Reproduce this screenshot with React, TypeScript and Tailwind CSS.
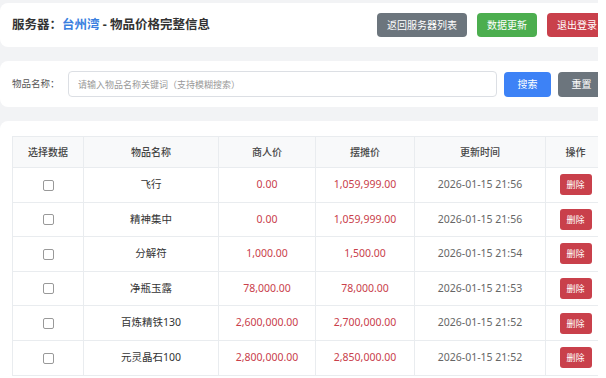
import React from "react";

interface Item {
  name: string;
  merchant: string;
  stall: string;
  time: string;
}

const items: Item[] = [
  { name: "飞行", merchant: "0.00", stall: "1,059,999.00", time: "2026-01-15 21:56" },
  { name: "精神集中", merchant: "0.00", stall: "1,059,999.00", time: "2026-01-15 21:56" },
  { name: "分解符", merchant: "1,000.00", stall: "1,500.00", time: "2026-01-15 21:54" },
  { name: "净瓶玉露", merchant: "78,000.00", stall: "78,000.00", time: "2026-01-15 21:53" },
  { name: "百炼精铁130", merchant: "2,600,000.00", stall: "2,700,000.00", time: "2026-01-15 21:52" },
  { name: "元灵晶石100", merchant: "2,800,000.00", stall: "2,850,000.00", time: "2026-01-15 21:52" },
];

const cell = "border border-[#e9ecef] text-center";

const App = () => {
  return (
    <div
      className="flex w-[606px] h-[378px] overflow-hidden bg-white"
      style={{ fontFamily: '"Noto Sans", "Noto Sans CJK SC", sans-serif' }}>
      <div className="w-[598px] h-full overflow-hidden bg-[#f2f3f5]">
        <div className="w-[624px] pt-[3px] flex flex-col gap-[14px]">
          {/* header */}
          <div className="h-[44px] bg-white rounded-lg flex items-center justify-between pl-3 pr-[17px]">
            <h1 className="text-[12.5px] font-bold text-[#333] leading-none">
              服务器：<span className="text-[#3b7fe0]">台州湾</span> - 物品价格完整信息
            </h1>
            <div className="flex items-center gap-[10px] text-[10px] text-white">
              <button className="h-[24px] px-[10px] rounded bg-[#6c757d]">返回服务器列表</button>
              <button className="h-[24px] px-[10px] rounded bg-[#4cae4f]">数据更新</button>
              <button className="h-[24px] px-[10px] rounded bg-[#c9404b]">退出登录</button>
            </div>
          </div>

          {/* search */}
          <div className="h-[46px] bg-white rounded-lg flex items-center pl-3 pr-[14px]">
            <span className="shrink-0 whitespace-nowrap text-[9.5px] text-[#555] w-[56px]">物品名称：</span>
            <input
              className="shrink-0 w-[429px] h-[26px] border border-[#dcdfe4] rounded px-[9px] text-[9px] outline-none placeholder:text-[#999]"
              placeholder="请输入物品名称关键词（支持模糊搜索）"
            />
            <button className="shrink-0 ml-[7px] w-[47px] h-[25px] rounded bg-[#3d82f6] text-white text-[10px]">搜索</button>
            <button className="shrink-0 ml-[7px] w-[47px] h-[25px] rounded bg-[#6c757d] text-white text-[10px]">重置</button>
          </div>

          {/* table */}
          <div className="bg-white rounded-lg pt-[15px] pl-3 pb-4">
            <table className="border-collapse text-[10.5px]">
              <thead>
                <tr className="h-[31px] bg-[#f8f9fa] text-[#444] text-[10px]">
                  <th className={`${cell} w-[71px] font-medium`}>选择数据</th>
                  <th className={`${cell} w-[135px] font-medium`}>物品名称</th>
                  <th className={`${cell} w-[97px] font-medium`}>商人价</th>
                  <th className={`${cell} w-[99px] font-medium`}>摆摊价</th>
                  <th className={`${cell} w-[131px] font-medium`}>更新时间</th>
                  <th className={`${cell} w-[60px] font-medium`}>操作</th>
                </tr>
              </thead>
              <tbody>
                {items.map((item) => (
                  <tr key={item.name} className="h-[34.6px]">
                    <td className={cell}>
                      <span className="inline-block align-middle w-[11px] h-[11px] border border-[#999] rounded-[2px]" />
                    </td>
                    <td className={`${cell} text-[#333]`}>{item.name}</td>
                    <td className={`${cell} text-[#c9404b]`}>{item.merchant}</td>
                    <td className={`${cell} text-[#c9404b]`}>{item.stall}</td>
                    <td className={`${cell} text-[#666]`}>{item.time}</td>
                    <td className={cell}>
                      <button className="w-[32px] h-[21px] rounded-[3px] bg-[#c9404b] text-white text-[9px] leading-none">
                        删除
                      </button>
                    </td>
                  </tr>
                ))}
              </tbody>
            </table>
          </div>
        </div>
      </div>
      <div className="w-2 h-full bg-white" />
    </div>
  );
};

export default App;
